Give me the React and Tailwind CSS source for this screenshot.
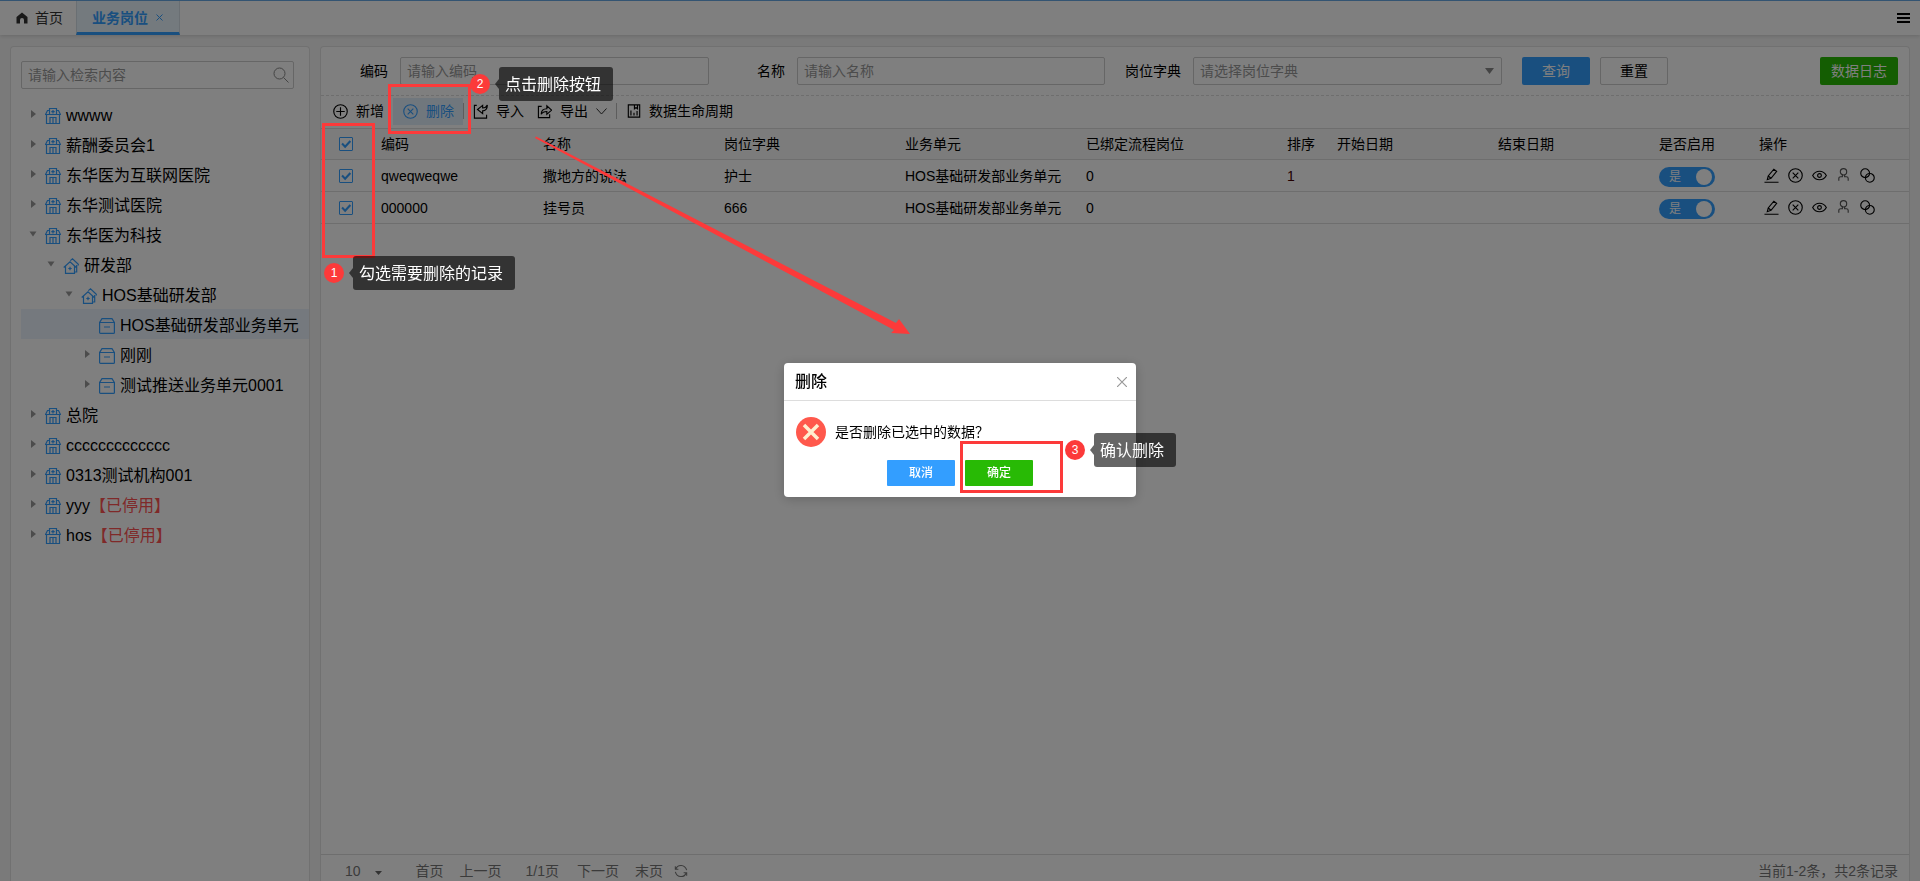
import React, { useState } from 'react';

const TREE = [
  { id: 1, level: 0, icon: 'hospital', label: 'wwww', state: 'closed' },
  { id: 2, level: 0, icon: 'hospital', label: '薪酬委员会1', state: 'closed' },
  { id: 3, level: 0, icon: 'hospital', label: '东华医为互联网医院', state: 'closed' },
  { id: 4, level: 0, icon: 'hospital', label: '东华测试医院', state: 'closed' },
  { id: 5, level: 0, icon: 'hospital', label: '东华医为科技', state: 'open' },
  { id: 6, level: 1, icon: 'house', label: '研发部', state: 'open' },
  { id: 7, level: 2, icon: 'house', label: 'HOS基础研发部', state: 'open' },
  { id: 8, level: 3, icon: 'unit', label: 'HOS基础研发部业务单元', state: 'leaf', selected: true },
  { id: 9, level: 3, icon: 'unit', label: '刚刚', state: 'closed' },
  { id: 10, level: 3, icon: 'unit', label: '测试推送业务单元0001', state: 'closed' },
  { id: 11, level: 0, icon: 'hospital', label: '总院', state: 'closed' },
  { id: 12, level: 0, icon: 'hospital', label: 'ccccccccccccc', state: 'closed' },
  { id: 13, level: 0, icon: 'hospital', label: '0313测试机构001', state: 'closed' },
  { id: 14, level: 0, icon: 'hospital', label: 'yyy', state: 'closed', disabled: true },
  { id: 15, level: 0, icon: 'hospital', label: 'hos', state: 'closed', disabled: true },
];

const ROWS = [
  { code: 'qweqweqwe', name: '撒地方的说法', dict: '护士', unit: 'HOS基础研发部业务单元', bound: '0', sort: '1' },
  { code: '000000', name: '挂号员', dict: '666', unit: 'HOS基础研发部业务单元', bound: '0', sort: '' },
];

const COLUMNS = [
  { title: '编码', width: 'w-[162px]' },
  { title: '名称', width: 'w-[181px]' },
  { title: '岗位字典', width: 'w-[181px]' },
  { title: '业务单元', width: 'w-[181px]' },
  { title: '已绑定流程岗位', width: 'w-[201px]' },
  { title: '排序', width: 'w-[50px]' },
  { title: '开始日期', width: 'w-[161px]' },
  { title: '结束日期', width: 'w-[161px]' },
  { title: '是否启用', width: 'w-[100px]' },
  { title: '操作', width: '' },
];

const LEVEL_PADDING = ['pl-[8px]', 'pl-[26px]', 'pl-[44px]', 'pl-[62px]'];

const Svg = ({ size = 16, sw = 1, children, className = '' }) => (
  <svg
    width={size}
    height={size}
    viewBox="0 0 16 16"
    fill="none"
    stroke="currentColor"
    strokeWidth={sw}
    className={`shrink-0 ${className}`}
    aria-hidden="true"
  >
    {children}
  </svg>
);

const TreeIcon = ({ type }) => {
  if (type === 'hospital') {
    return (
      <Svg sw={1.2} className="text-[#339eff]">
        <path d="M4.500 6.500v-6h7v6M4.500 2.500h-2l-2 4h15l-2-4h-2M1.500 6.500v9h13v-9M5 15.500v-6h6v6M8 9.500v6M8 2v3.400M6.300 3.700h3.400" />
      </Svg>
    );
  }
  if (type === 'house') {
    return (
      <Svg sw={1.2} className="text-[#339eff]">
        <path d="M.7 9.500 7 3.800l6.300 5.700M2.500 8.200v7.100h9V8.200M7 8.800v3.400M5.300 10.500h3.400M7.300 2.600 9.500.900l5.800 5.300v1.300M13.700 7v7h-2" />
      </Svg>
    );
  }
  return (
    <Svg sw={1.2} className="text-[#339eff]">
      <path d="M.6 4.500h14.800v9.900a1 1 0 0 1-1 1H1.600a1 1 0 0 1-1-1V4.500L3 .6h10l2.400 3.900M5 9h6" />
    </Svg>
  );
};

const TreeArrow = ({ state }) => (
  <svg width="8" height="8" viewBox="0 0 8 8" className="shrink-0 text-[#999]" fill="currentColor" aria-hidden="true">
    {state === 'closed' && <path d="M2 0 7 4 2 8z" />}
    {state === 'open' && <path d="M.5 1.500h7L4 6.500z" />}
  </svg>
);

const Checkbox = ({ label, checked, onChange }) => (
  <label className="relative ml-[18px] block h-[14px] w-[14px]">
    <input
      type="checkbox"
      aria-label={label}
      checked={checked}
      onChange={onChange}
      className="block h-[14px] w-[14px] appearance-none rounded-[1px] border border-[#339eff] bg-white"
    />
    {checked && (
      <Svg size={14} sw={2.4} className="pointer-events-none absolute inset-0 text-[#339eff]">
        <path d="M3.500 7.500 7 11l6-6.500" />
      </Svg>
    )}
  </label>
);

const Header = () => (
  <header className="relative flex h-[35px] shrink-0 items-stretch border-t border-[#66a9e4] bg-white shadow-[0_1px_4px_rgba(0,0,0,0.15)]">
    <button type="button" className="flex items-center gap-[7px] pr-[13px] pl-[16px] text-[#333]">
      <svg width="12" height="12" viewBox="0 0 12 12" fill="currentColor" aria-hidden="true">
        <path d="M6 .5 11.500 5v6.500h-3.500V8a2 2 0 0 0-4 0v3.500H.5V5z" />
      </svg>
      首页
    </button>
    <div className="flex items-center gap-[8px] border-x border-b-[3px] border-x-[#d5dfe6] border-b-[#339eff] bg-[#e9f4fd] pt-[2px] pr-[16px] pl-[15px] text-[#339eff]">
      <button type="button" className="font-bold">业务岗位</button>
      <button type="button" aria-label="关闭">
        <svg width="7" height="7" viewBox="0 0 7 7" stroke="currentColor" aria-hidden="true">
          <path d="M.5.5l6 6M6.500.5l-6 6" />
        </svg>
      </button>
    </div>
    <button type="button" aria-label="菜单" className="mr-[10px] ml-auto">
      <svg width="13" height="10" viewBox="0 0 13 10" fill="#000" aria-hidden="true">
        <path d="M0 0h13v2H0zM0 4h13v2H0zM0 8h13v2H0z" />
      </svg>
    </button>
  </header>
);

const Sidebar = () => (
  <aside className="w-[300px] shrink-0 rounded-t border border-b-0 border-[#e2e2e2] bg-white pt-[14px] pl-[10px]">
    <div className="mr-[15px] flex h-[28px] items-center rounded-[2px] border border-[#ccc] pr-[4px] pl-[6px]">
      <input
        aria-label="检索"
        placeholder="请输入检索内容"
        className="min-w-0 flex-1 text-[#333] outline-none placeholder:text-[#999]"
      />
      <Svg size={16} className="text-[#888]">
        <circle cx="6.500" cy="6.500" r="5.500" />
        <path d="m10.500 10.500 5 5" />
      </Svg>
    </div>
    <ul className="mt-[10px] text-base">
      {TREE.map((node) => (
        <li
          key={node.id}
          className={`flex h-[30px] items-center whitespace-nowrap ${LEVEL_PADDING[node.level]} ${
            node.selected ? 'bg-[#eaf3fc]' : ''
          }`}
        >
          <TreeArrow state={node.state} />
          <span className="mt-[4px] ml-[8px]">
            <TreeIcon type={node.icon} />
          </span>
          <span className="mt-[3px] ml-[5px]">
            {node.label}
            {node.disabled && <span className="text-[#ff5252]">【已停用】</span>}
          </span>
        </li>
      ))}
    </ul>
  </aside>
);

const FilterBar = () => (
  <form className="flex h-[49px] shrink-0 items-center gap-[20px] border-b border-dashed border-[#ddd] pr-[11px] pl-[11px]">
    <div className="flex items-center gap-[12px]">
      <label htmlFor="code" className="w-[56px] text-right">编码</label>
      <input id="code" placeholder="请输入编码" className="h-[28px] w-[309px] rounded-[2px] border border-[#ccc] px-[6px] placeholder:text-[#999]" />
    </div>
    <div className="flex items-center gap-[12px]">
      <label htmlFor="name" className="w-[56px] text-right">名称</label>
      <input id="name" placeholder="请输入名称" className="h-[28px] w-[308px] rounded-[2px] border border-[#ccc] px-[6px] placeholder:text-[#999]" />
    </div>
    <div className="flex items-center gap-[12px]">
      <label htmlFor="dict" className="w-[56px] text-right">岗位字典</label>
      <div className="relative">
        <select id="dict" className="block h-[28px] w-[309px] appearance-none rounded-[2px] border border-[#ccc] px-[6px] text-[#999]">
          <option>请选择岗位字典</option>
        </select>
        <svg width="9" height="6" viewBox="0 0 9 6" fill="#888" className="pointer-events-none absolute top-[11px] right-[8px]" aria-hidden="true">
          <path d="M0 0h9L4.500 6z" />
        </svg>
      </div>
    </div>
    <div className="flex gap-[10px]">
      <button type="button" className="h-[28px] w-[68px] rounded-[2px] bg-[#339eff] text-white">查询</button>
      <button type="button" className="h-[28px] w-[68px] rounded-[2px] border border-[#ccc] bg-white">重置</button>
    </div>
    <button type="button" className="ml-auto h-[28px] w-[78px] rounded-[2px] bg-[#28ba05] text-white">数据日志</button>
  </form>
);

const Toolbar = () => (
  <div className="flex h-[32px] shrink-0 items-center pb-[2px] pl-[12px]">
    <button type="button" className="flex items-center gap-[8px]">
      <Svg size={15} sw={1.2}>
        <circle cx="8" cy="8" r="7.200" />
        <path d="M8 3.500v9M3.500 8h9" />
      </Svg>
      新增
    </button>
    <button type="button" className="ml-[9px] flex h-[27px] w-[70px] items-center gap-[8px] bg-[#e1eefa] pl-[10px] text-[#339eff]">
      <Svg size={15} sw={1.2}>
        <circle cx="8" cy="8" r="7.200" />
        <path d="m5 5 6 6M11 5l-6 6" />
      </Svg>
      删除
    </button>
    <span className="h-[16px] w-px bg-[#bbb]" />
    <button type="button" className="ml-[9px] flex items-center gap-[8px]">
      <Svg size={15} sw={1.2}>
        <path d="M4 1.500H1.500v13.500h13v-3.500M15.300 1c0 4.500-2 6.300-5 6.300v3L4.800 5.800l5.500-4.300v2.700c2 0 4-1 5-3.200z" />
      </Svg>
      导入
    </button>
    <button type="button" className="ml-[13px] flex items-center gap-[8px]">
      <Svg size={15} sw={1.2}>
        <path d="M5 2.500H1.500v12h12V11M4.500 11c0-4 2-6 6-6V2l5 4.500-5 4.500V8c-3 0-5 1-6 3z" />
      </Svg>
      导出
      <svg width="11" height="7" viewBox="0 0 11 7" fill="none" stroke="#333" aria-hidden="true">
        <path d="m.5.5 5 5.500 5-5.500" />
      </svg>
    </button>
    <span className="ml-[9px] h-[16px] w-px bg-[#bbb]" />
    <button type="button" className="ml-[10px] flex items-center gap-[8px]">
      <Svg size={14} sw={1.3}>
        <path d="M1.500 1h13v14h-13zM8.500 1v4.500l1.800-1.500L12 5.500V1M4.500 7.500V13M8 10v3M11.500 8v5" />
      </Svg>
      数据生命周期
    </button>
  </div>
);

const Switch = ({ label }) => {
  const [on, setOn] = useState(true);
  return (
    <button
      type="button"
      role="switch"
      aria-checked={on}
      aria-label={label}
      onClick={() => setOn(!on)}
      className={`mt-[2px] flex h-[20px] w-[56px] items-center justify-between rounded-full pr-[3px] pl-[10px] text-xs text-white ${
        on ? 'bg-[#339eff]' : 'bg-[#bbb]'
      }`}
    >
      {on ? '是' : '否'}
      <span className="h-[16px] w-[16px] rounded-full bg-white" />
    </button>
  );
};

const RowActions = () => (
  <div className="flex items-center gap-[9px] pl-[5px]">
    <button type="button" aria-label="编辑">
      <Svg size={15} sw={1.2}>
        <path d="M.5 15.200h15M3.500 12.500l1-4L10.500 1.300l3 2.300-6 7.400-4 1.500zM4.500 8.500l3 2.400" />
      </Svg>
    </button>
    <button type="button" aria-label="删除">
      <Svg size={15} sw={1.2}>
        <circle cx="8" cy="8" r="7.200" />
        <path d="m5 5 6 6M11 5l-6 6" />
      </Svg>
    </button>
    <button type="button" aria-label="查看">
      <Svg size={15} sw={1.2}>
        <path d="M.7 8C4 2 12 2 15.300 8 12 14 4 14 .7 8z" />
        <circle cx="8" cy="8" r="2" />
      </Svg>
    </button>
    <button type="button" aria-label="人员">
      <Svg size={15} sw={1.2} className="text-[#555]">
        <circle cx="8" cy="4" r="3.400" />
        <path d="M6.800 7.300v2H5a2 2 0 0 0-2 2v2.200M9.200 7.300v2H11a2 2 0 0 1 2 2v2.200" />
      </Svg>
    </button>
    <button type="button" aria-label="关联">
      <Svg size={15} sw={1.2}>
        <circle cx="5.500" cy="5.500" r="4.700" />
        <circle cx="10.500" cy="10.500" r="4.700" />
      </Svg>
    </button>
  </div>
);

const DataTable = () => {
  const [checked, setChecked] = useState(ROWS.map(() => true));
  const allChecked = checked.every(Boolean);

  const toggleRow = (index) => {
    setChecked(checked.map((value, i) => (i === index ? !value : value)));
  };

  return (
    <table className="w-full table-fixed border-collapse border-t border-[#ddd] text-left">
      <thead>
        <tr className="h-[31px] border-b border-[#ddd] bg-[#f8f8f8]">
          <th className="w-[52px]">
            <Checkbox label="全选" checked={allChecked} onChange={() => setChecked(ROWS.map(() => !allChecked))} />
          </th>
          {COLUMNS.map((column) => (
            <th key={column.title} className={`px-[8px] font-normal ${column.width}`}>
              {column.title}
            </th>
          ))}
        </tr>
      </thead>
      <tbody>
        {ROWS.map((row, index) => (
          <tr key={row.code} className="h-[32px] border-b border-[#ddd]">
            <td>
              <Checkbox label={`选择 ${row.code}`} checked={checked[index]} onChange={() => toggleRow(index)} />
            </td>
            <td className="px-[8px]">{row.code}</td>
            <td className="px-[8px]">{row.name}</td>
            <td className="px-[8px]">{row.dict}</td>
            <td className="px-[8px] whitespace-nowrap">{row.unit}</td>
            <td className="px-[8px]">{row.bound}</td>
            <td className="px-[8px] text-[#400]">{row.sort}</td>
            <td />
            <td />
            <td className="px-[8px]">
              <Switch label={`启用 ${row.code}`} />
            </td>
            <td className="px-[8px]">
              <RowActions />
            </td>
          </tr>
        ))}
      </tbody>
    </table>
  );
};

const Pagination = () => (
  <footer className="flex h-[27px] shrink-0 items-center border-t border-[#ddd] pt-[6px] pr-[11px] pl-[10px] text-[#777]">
    <button type="button" className="ml-[14px] flex items-center gap-[14px]">
      10
      <svg width="7" height="4" viewBox="0 0 7 4" fill="#666" className="mt-[4px]" aria-hidden="true">
        <path d="M0 0h7L3.500 4z" />
      </svg>
    </button>
    <button type="button" className="ml-[34px]">首页</button>
    <button type="button" className="ml-[16px]">上一页</button>
    <span className="ml-[24px]">1/1页</span>
    <button type="button" className="ml-[18px]">下一页</button>
    <button type="button" className="ml-[16px]">末页</button>
    <button type="button" aria-label="刷新" className="ml-[11px]">
      <Svg size={14} sw={1.2}>
        <path d="M1.500 2.500v3.500H5M2 6c2-6 10.500-6 12.500 1M14.500 13.500V10H11M14 10c-2 6-10.500 6-12.500-1" />
      </Svg>
    </button>
    <span className="ml-auto">当前1-2条，共2条记录</span>
  </footer>
);

const ConfirmDialog = () => (
  <div className="fixed inset-0 flex items-start justify-center bg-black/50 pt-[363px]">
    <div role="dialog" aria-modal="true" aria-labelledby="dialog-title" className="h-[134px] w-[352px] rounded-[4px] bg-white shadow-[0_2px_12px_rgba(0,0,0,0.2)]">
      <div className="flex h-[38px] items-center justify-between border-b border-[#ddd] pr-[9px] pl-[11px]">
        <h2 id="dialog-title" className="text-base font-medium">删除</h2>
        <button type="button" aria-label="关闭">
          <svg width="10" height="10" viewBox="0 0 10 10" stroke="#999" strokeWidth="1.2" aria-hidden="true">
            <path d="m0 0 10 10M10 0 0 10" />
          </svg>
        </button>
      </div>
      <div className="flex items-center gap-[9px] pt-[16px] pl-[12px]">
        <svg width="30" height="30" viewBox="0 0 30 30" aria-hidden="true">
          <circle cx="15" cy="15" r="15" fill="#ff584c" />
          <path d="m8 8 14 14M22 8 8 22" stroke="#ffeed0" strokeWidth="3.500" />
        </svg>
        是否删除已选中的数据？
      </div>
      <div className="flex justify-center gap-[10px] pt-[13px] text-xs font-medium text-white">
        <button type="button" className="h-[26px] w-[68px] rounded-[1px] bg-[#339eff]">取消</button>
        <button type="button" className="h-[26px] w-[68px] rounded-[1px] bg-[#28ba05]">确定</button>
      </div>
    </div>
  </div>
);

// Numbered badge with its dark tooltip
const Step = ({ number, text, position }) => (
  <div className={`absolute flex items-center ${position}`}>
    <span className="flex h-[20px] w-[20px] items-center justify-center rounded-full bg-[#fc3a3a] text-xs">{number}</span>
    <svg width="4" height="10" viewBox="0 0 4 10" className="ml-[5px]" aria-hidden="true">
      <path d="M4 0v10L0 5z" fill="#000" fillOpacity="0.6" />
    </svg>
    <span className="flex h-[34px] items-center rounded-[3px] bg-black/60 pt-[2px] pr-[12px] pl-[6px] text-base whitespace-nowrap">{text}</span>
  </div>
);

const Guide = () => (
  <div className="pointer-events-none absolute inset-0 text-white">
    <div className="absolute top-[123px] left-[322px] h-[135px] w-[53px] border-3 border-[#fc3a3a]" />
    <div className="absolute top-[84px] left-[388px] h-[50px] w-[83px] border-3 border-[#fc3a3a]" />
    <div className="absolute top-[441px] left-[960px] h-[52px] w-[103px] border-3 border-[#fc3a3a]" />
    <svg width="376" height="200" viewBox="0 0 376 200" className="absolute top-[136px] left-[535px]" aria-hidden="true">
      <path d="M1 0.500 361 187 364 183 375 198 356 197 359 194 0 2z" fill="#fc3a3a" />
    </svg>
    <Step number={1} text="勾选需要删除的记录" position="top-[256px] left-[324px]" />
    <Step number={2} text="点击删除按钮" position="top-[67px] left-[470px]" />
    <Step number={3} text="确认删除" position="top-[433px] left-[1065px]" />
  </div>
);

const App = () => (
  <div className="relative flex h-screen flex-col overflow-hidden bg-[#f5f5f5] font-['Liberation_Sans','Noto_Sans_CJK_SC',sans-serif] text-sm leading-[20px] text-black">
    <Header />
    <div className="flex min-h-0 flex-1 gap-[10px] pt-[11px] pr-[10px] pl-[10px]">
      <Sidebar />
      <main className="flex min-w-0 flex-1 flex-col rounded-t border border-b-0 border-[#e2e2e2] bg-white">
        <FilterBar />
        <Toolbar />
        <div className="min-h-0 flex-1">
          <DataTable />
        </div>
        <Pagination />
      </main>
    </div>
    <ConfirmDialog />
    <Guide />
  </div>
);

export default App;
